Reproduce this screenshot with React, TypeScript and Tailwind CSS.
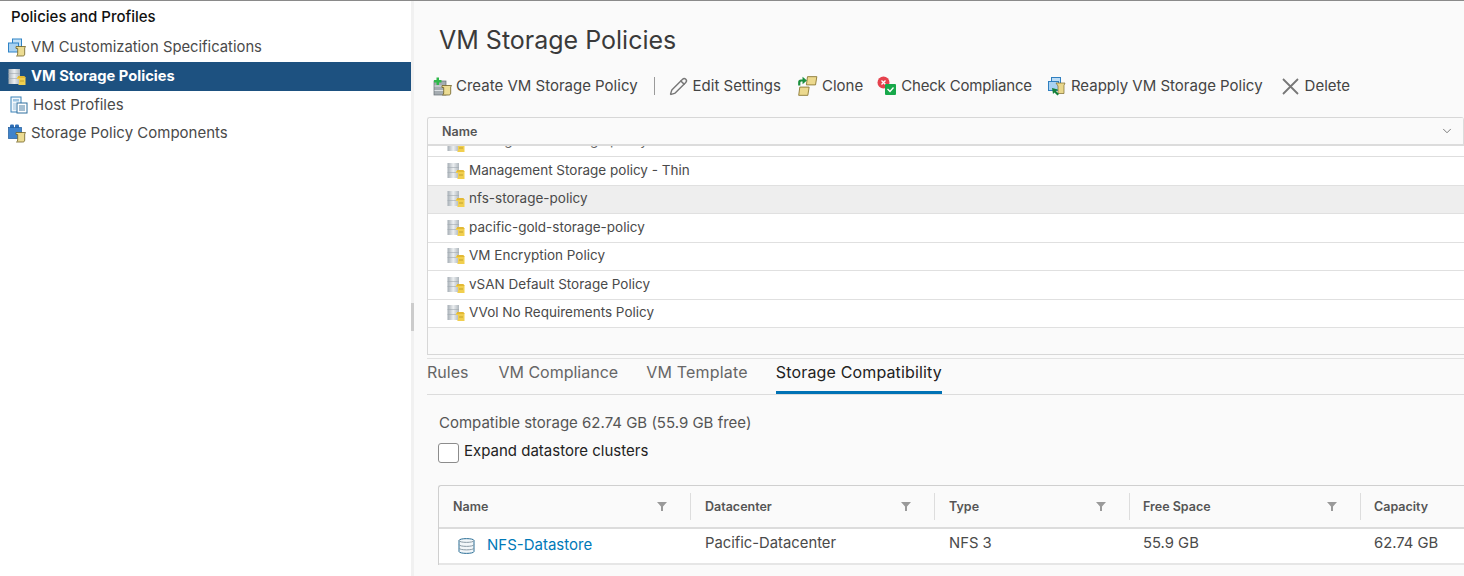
import { ChevronDown, Pencil } from 'lucide-react';

const font = "font-['Inter','Noto_Sans',sans-serif]";

// Small scroll shared by several vSphere icons
function Scroll({ x = 0, y = 0 }: { x?: number; y?: number }) {
  return (
    <path
      transform={`translate(${x} ${y})`}
      d="M1 1h9.500l-.8 1.500v6c0 1.500-.8 2-2 2H1.500c.8-.5 1.200-1 1.200-2V3H1z"
      fill="#ecdc93"
      stroke="#6f5f24"
      strokeWidth="0.8"
    />
  );
}

function CustomizationIcon() {
  return (
    <svg width="19" height="19" viewBox="0 0 19 19" className="shrink-0">
      <rect x="4.500" y="1" width="9" height="8" fill="#c4e1f7" stroke="#2f83c6" />
      <rect x="0.500" y="5" width="10" height="9" fill="#a9d2f2" stroke="#2f83c6" />
      <Scroll x={7} y={7.500} />
    </svg>
  );
}

function PolicyIcon() {
  return (
    <svg width="18" height="18" viewBox="0 0 18 18" className="shrink-0">
      <defs>
        <linearGradient id="policyBody" x1="0" x2="1" y1="0" y2="0">
          <stop offset="0" stopColor="#a6aeb5" />
          <stop offset="0.5" stopColor="#eceff1" />
          <stop offset="1" stopColor="#aeb6bc" />
        </linearGradient>
      </defs>
      <rect x="0.500" y="1" width="11.500" height="15" fill="url(#policyBody)" />
      <path d="M0.500 5.500H12M0.500 10.500H12" stroke="#a0a8ae" strokeWidth="0.6" />
      <path d="M9 9h8.500v8H10c.6-.5 1-1 1-2v-4H9z" fill="#f1cf4f" />
      <path d="M10 8h6.500l1 2H10z" fill="#e3b935" />
      <path d="M12 13h4" stroke="#c4a32f" />
    </svg>
  );
}

function HostProfileIcon() {
  return (
    <svg width="18" height="18" viewBox="0 0 18 18" className="shrink-0">
      <rect x="1" y="1" width="10" height="15" fill="#f3f8fc" stroke="#3b82b8" />
      <rect x="3" y="3" width="6" height="2.500" fill="#9cc4e2" />
      <rect x="3" y="7" width="3" height="7" fill="#c7dcec" />
      <rect x="7" y="7" width="10" height="10" fill="#fff" stroke="#2f6f9e" />
      <path d="M9 10h6M9 12h6M9 14h6" stroke="#4b7fa5" />
    </svg>
  );
}

function ComponentsIcon() {
  return (
    <svg width="19" height="19" viewBox="0 0 19 19" className="shrink-0">
      <rect x="2" y="0.500" width="4" height="5" rx="1.200" fill="#2d6db5" />
      <rect x="7" y="0.500" width="4" height="5" rx="1.200" fill="#2d6db5" />
      <rect x="0.500" y="3.500" width="13" height="11" fill="#3f83cc" stroke="#1f5a9c" strokeWidth="0.7" />
      <Scroll x={7} y={7.500} />
    </svg>
  );
}

function CreateIcon() {
  return (
    <svg width="19" height="19" viewBox="0 0 19 19" className="shrink-0">
      <rect x="1" y="4" width="12" height="14" fill="#a5acb1" stroke="#666e73" strokeWidth="0.7" />
      <path d="M1.500 9h11M1.500 13.500h11" stroke="#dfe3e6" />
      <Scroll x={8} y={7.500} />
      <path d="M3.500 0.500h2.500V3h2.500v2.500H6V8H3.500V5.500H1V3h2.500z" fill="#2fb84a" />
    </svg>
  );
}

function CloneIcon() {
  return (
    <svg width="21" height="22" viewBox="0 0 19 20" className="shrink-0">
      <path d="M9.500 1.500h8.500l-1.200 7.500H8.500z" fill="#ecd98e" stroke="#8a7631" strokeWidth="0.8" />
      <path d="M2.500 11h8.500l-1.200 7.500H1.500z" fill="#ecd98e" stroke="#8a7631" strokeWidth="0.8" />
      <path d="M1 9.500V6.500C1 5 2 4 3.500 4H5V1.500L9 5 5 8.500V6H4.200C3.500 6 3 6.500 3 7.200V9.500z" fill="#1b8f3e" />
    </svg>
  );
}

function ComplianceIcon() {
  return (
    <svg width="20" height="20" viewBox="0 0 20 20" className="shrink-0">
      <circle cx="6.500" cy="6.500" r="6" fill="#e5424d" />
      <path d="M4.500 4.500l4 4M8.500 4.500l-4 4" stroke="#fff" strokeWidth="1.300" />
      <rect x="8" y="8" width="11" height="11" rx="1" fill="#17a84a" />
      <path d="M10.500 13l2.500 2.500 3.500-4" stroke="#fff" strokeWidth="1.300" fill="none" />
    </svg>
  );
}

function ReapplyIcon() {
  return (
    <svg width="19" height="19" viewBox="0 0 19 19" className="shrink-0">
      <rect x="3.500" y="0.500" width="9" height="7" fill="#bcdcf5" stroke="#2f7fc0" />
      <rect x="0.500" y="4.500" width="10" height="9" fill="#a9d2f2" stroke="#2f7fc0" />
      <path d="M8 6h9l-1 2.500v8h-6V9z" fill="#e9d78c" stroke="#7b6a2c" strokeWidth="0.7" />
      <path d="M4 11l6 1.500-2 1.500 3 3-1.500 1.500-3-3L5 17z" fill="#14803a" />
    </svg>
  );
}

function DeleteIcon() {
  return (
    <svg width="17" height="17" viewBox="0 0 17 17" className="shrink-0">
      <path d="M1 1l15 15M16 1L1 16" stroke="#777" strokeWidth="1.800" />
    </svg>
  );
}

function DatastoreIcon() {
  return (
    <svg width="17" height="18" viewBox="0 0 17 18" className="shrink-0">
      <path d="M1 3.500C1 1 16 1 16 3.500v11c0 2.500-15 2.500-15 0z" fill="#f2f6f9" stroke="#2a6f97" />
      <path d="M1 3.500c0 2.500 15 2.500 15 0M1 7.500c0 2.500 15 2.500 15 0M1 11c0 2.500 15 2.500 15 0" fill="none" stroke="#8a9aa5" />
    </svg>
  );
}

function FilterIcon() {
  return (
    <svg width="10" height="10" viewBox="0 0 10 10" className="shrink-0">
      <path d="M0 1h10L6 5.500V10H4V5.500z" fill="#9a9a9a" />
    </svg>
  );
}

const policyRows = [
  'Management Storage policy - Thin',
  'nfs-storage-policy',
  'pacific-gold-storage-policy',
  'VM Encryption Policy',
  'vSAN Default Storage Policy',
  'VVol No Requirements Policy',
];

const columns = [
  { name: 'Name', width: 'w-[252px]', pad: 'pl-[14px]' },
  { name: 'Datacenter', width: 'w-[244px]', pad: 'pl-[14px]' },
  { name: 'Type', width: 'w-[195px]', pad: 'pl-[14px]' },
  { name: 'Free Space', width: 'w-[231px]', pad: 'pl-[13px]' },
];

function ToolButton({ icon, label, className, labelClass = '' }: { icon: React.ReactNode; label: string; className: string; labelClass?: string }) {
  return (
    <div className={`flex items-center ${className}`}>
      {icon}
      <span className={`whitespace-nowrap ${labelClass}`}>{label}</span>
    </div>
  );
}

export default function App() {
  return (
    <div className={`${font} flex h-[576px] w-[1464px] overflow-hidden border-t border-t-[#8a8a8a] bg-white text-[15px] text-[#4a4a4a]`}>
      {/* Left navigator */}
      <aside className="w-[411px] shrink-0">
        <h2 className="pl-[11px] pt-[6px] text-[15px] leading-[19px] font-medium text-[#111]">Policies and Profiles</h2>
        <div className="mt-[7px] flex h-[28px] items-center gap-[4px] pl-[8px] text-[14.800px]">
          <CustomizationIcon />
          <span>VM Customization Specifications</span>
        </div>
        <div className="mt-[1px] flex h-[29px] items-center gap-[5px] bg-[#1d5180] pl-[8px] text-[14.700px] font-bold text-white">
          <PolicyIcon />
          <span>VM Storage Policies</span>
        </div>
        <div className="flex h-[28px] items-center gap-[5px] pl-[10px]">
          <HostProfileIcon />
          <span>Host Profiles</span>
        </div>
        <div className="flex h-[28px] items-center gap-[4px] pl-[8px]">
          <ComponentsIcon />
          <span>Storage Policy Components</span>
        </div>
      </aside>

      {/* Splitter */}
      <div className="flex w-[3px] shrink-0 items-center bg-[#f1f1f1]">
        <div className="mt-[56px] h-[28px] w-full bg-[#cccccc]" />
      </div>

      {/* Main panel */}
      <main className="min-w-0 flex-1 bg-[#fafafa]">
        <h1 className="pl-[25px] pt-[23px] text-[25px] leading-[32px] font-normal text-[#3a3a3a]">VM Storage Policies</h1>

        <div className="mt-[14px] flex h-[32px] items-center pl-[19px] text-[#444]">
          <ToolButton icon={<CreateIcon />} label="Create VM Storage Policy" className="gap-[4px]" />
          <div className="ml-[16px] h-[18px] w-px bg-[#9a9a9a]" />
          <ToolButton icon={<Pencil size={19} strokeWidth={1.800} className="text-[#777]" />} label="Edit Settings" className="ml-[14px] gap-[5px]" />
          <ToolButton icon={<CloneIcon />} label="Clone" className="ml-[16px] gap-[4px]" />
          <ToolButton icon={<ComplianceIcon />} label="Check Compliance" className="ml-[14px] gap-[4px]" labelClass="tracking-[-0.19px]" />
          <ToolButton icon={<ReapplyIcon />} label="Reapply VM Storage Policy" className="ml-[16px] gap-[4px]" />
          <ToolButton icon={<DeleteIcon />} label="Delete" className="ml-[19px] gap-[6px]" />
        </div>

        {/* Policy grid */}
        <div className="ml-[13px] mt-[15px] h-[238px] overflow-hidden rounded-t-[3px] border border-[#d7d7d7] border-r-0">
          <div className="flex h-[28px] items-center justify-between border-b-[2px] border-[#dcdcdc] bg-[#fafafa] pl-[14px] text-[12.500px] font-semibold text-[#555]">
            <span className="translate-y-[1px] leading-[10px]">Name</span>
            <div className="flex h-full items-center">
              <ChevronDown size={14} strokeWidth={1.300} className="mr-[9px]" />
              <div className="h-full w-px bg-[#dcdcdc]" />
            </div>
          </div>
          <div className="bg-white">
            <div className="relative h-[11px] overflow-hidden border-b border-[#dedede]">
              <div className="absolute bottom-[3px] left-[19px] flex items-center">
                <PolicyIcon />
                <span className="ml-[4px] -translate-y-[4px] text-[13.500px] leading-[10px] text-[#666]">Management Storage policy - Thick</span>
              </div>
            </div>
            {policyRows.map((row) => (
              <div
                key={row}
                className={`flex h-[28.500px] items-center border-b-[1.500px] border-[#e0e0e0] pl-[19px] text-[13.500px] ${
                  row === 'nfs-storage-policy' ? 'bg-[#eeeeee]' : 'bg-white'
                }`}
              >
                <PolicyIcon />
                <span className="ml-[4px] -translate-y-[1px]">{row}</span>
              </div>
            ))}
          </div>
        </div>

        {/* Tabs */}
        <div className="ml-[13px] mt-[3px] flex h-[37px] border-b border-t border-[#e2e2e2] border-b-[#dcdcdc] text-[16px] text-[#666]">
          <div className="flex items-center pb-[10px]">Rules</div>
          <div className="ml-[30px] flex items-center pb-[10px]">VM Compliance</div>
          <div className="ml-[28px] flex items-center pb-[10px] tracking-[0.2px]">VM Template</div>
          <div className="ml-[28px] flex items-center border-b-[3px] border-[#0072b5] pb-[7px] tracking-[0.15px] text-[#222]">Storage Compatibility</div>
        </div>

        <div className="pl-[24px]">
          <p className="mt-[18px] pl-[1px] leading-[20px] text-[#555]">Compatible storage 62.74 GB (55.9 GB free)</p>
          <div className="mt-[9px] flex items-center gap-[5px] text-[#222]">
            <div className="h-[20px] w-[21px] rounded-[3px] border border-[#8c8c8c] bg-white" />
            <span className="-translate-y-[2px]">Expand datastore clusters</span>
          </div>

          {/* Datastore table */}
          <div className="mt-[20px] overflow-hidden rounded-tl-[3px] border-l border-t border-[#cfcfcf]">
            <div className="flex h-[43px] border-b-[2px] border-[#dcdcdc] text-[12.500px] font-semibold text-[#555]">
              {columns.map((col) => (
                <div key={col.name} className={`flex ${col.width} shrink-0 items-center py-[7px]`}>
                  <div className={`flex h-full flex-1 items-center justify-between border-r border-[#dddddd] pr-[23px] ${col.pad}`}>
                    <span className="translate-y-[1px]">{col.name}</span>
                    <FilterIcon />
                  </div>
                </div>
              ))}
              <div className="flex translate-y-[1px] items-center pl-[13px]">Capacity</div>
            </div>
            <div className="flex h-[36px] border-b-[2px] border-[#e6e6e6] bg-white text-[14.800px]">
              <div className="flex w-[252px] shrink-0 items-center gap-[12px] pl-[19px] text-[#0079b8]">
                <DatastoreIcon />
                <span className="text-[15px]">NFS-Datastore</span>
              </div>
              <div className="w-[244px] shrink-0 pl-[14px] pt-[3px]">Pacific-Datacenter</div>
              <div className="w-[195px] shrink-0 pl-[14px] pt-[3px]">NFS 3</div>
              <div className="w-[231px] shrink-0 pl-[13px] pt-[3px]">55.9 GB</div>
              <div className="pl-[13px] pt-[3px] whitespace-nowrap">62.74 GB</div>
            </div>
          </div>
        </div>
      </main>
    </div>
  );
}
